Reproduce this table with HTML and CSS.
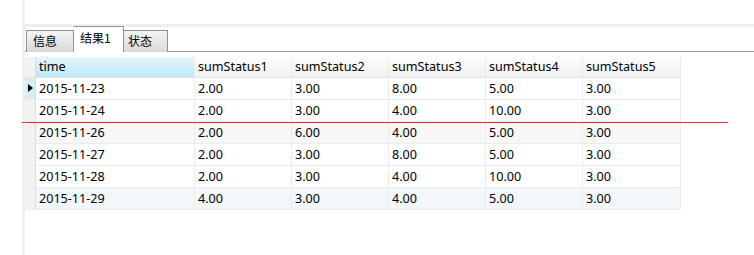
FILE: index.html
```html
<html>
  <head>
    <title>结果1</title>
    <meta charset="utf-8">
    <link rel="stylesheet" href="styles.css">
  </head>
  <body>
    <div class="window">
      <div class="gutter"></div>
      <div class="main">
        <div class="topbar"></div>
        <div class="tabs">
          <div class="tab">信息</div>
          <div class="tab tab--active">结果1</div>
          <div class="tab">状态</div>
        </div>

        <div class="grid">
          <div class="cell ind head"></div>
          <div class="cell head head--sel">time</div>
          <div class="cell head">sumStatus1</div>
          <div class="cell head">sumStatus2</div>
          <div class="cell head">sumStatus3</div>
          <div class="cell head">sumStatus4</div>
          <div class="cell head">sumStatus5</div>

          <div class="cell ind ind--cur"><span class="arrow"></span></div>
          <div class="cell">2015-11-23</div>
          <div class="cell">2.00</div>
          <div class="cell">3.00</div>
          <div class="cell">8.00</div>
          <div class="cell">5.00</div>
          <div class="cell">3.00</div>

          <div class="cell ind"></div>
          <div class="cell">2015-11-24</div>
          <div class="cell">2.00</div>
          <div class="cell">3.00</div>
          <div class="cell">4.00</div>
          <div class="cell">10.00</div>
          <div class="cell">3.00</div>

          <div class="cell ind"></div>
          <div class="cell alt">2015-11-26</div>
          <div class="cell alt">2.00</div>
          <div class="cell alt">6.00</div>
          <div class="cell alt">4.00</div>
          <div class="cell alt">5.00</div>
          <div class="cell alt">3.00</div>

          <div class="cell ind"></div>
          <div class="cell">2015-11-27</div>
          <div class="cell">2.00</div>
          <div class="cell">3.00</div>
          <div class="cell">8.00</div>
          <div class="cell">5.00</div>
          <div class="cell">3.00</div>

          <div class="cell ind"></div>
          <div class="cell">2015-11-28</div>
          <div class="cell">2.00</div>
          <div class="cell">3.00</div>
          <div class="cell">4.00</div>
          <div class="cell">10.00</div>
          <div class="cell">3.00</div>

          <div class="cell ind"></div>
          <div class="cell hover">2015-11-29</div>
          <div class="cell hover">4.00</div>
          <div class="cell hover">3.00</div>
          <div class="cell hover">4.00</div>
          <div class="cell hover">5.00</div>
          <div class="cell hover">3.00</div>
        </div>
      </div>
      <div class="redline"></div>
    </div>
  </body>
</html>
```

FILE: styles.css
```css
body {
  margin: 0;
  background: #ffffff;
  font-family: "Noto Sans", "Noto Sans CJK SC", sans-serif;
  font-size: 12.6px;
  color: #000000;
}

.window {
  position: relative;
  display: flex;
  height: 255px;
  overflow: hidden;
}

.gutter {
  width: 22px;
  border-right: 3px solid #f0f0f0;
}

.main {
  flex: 1;
}

.topbar {
  height: 24px;
  border-bottom: 3px solid #efefef;
}

.tabs {
  display: flex;
  align-items: flex-end;
  height: 24px;
  padding-left: 1px;
  border-bottom: 1px solid #9a9ca3;
}

.tab {
  box-sizing: border-box;
  height: 22px;
  line-height: 20px;
  padding-left: 6px;
  margin-bottom: -1px;
  border: 1px solid #8f9199;
  border-bottom: none;
  background: linear-gradient(#f4f4f4, #d9d9d9);
  font-family: "Noto Sans CJK SC", sans-serif;
  font-size: 12px;
}

.tab:first-child {
  width: 48px;
}

.tab + .tab {
  border-left: none;
}

.tab--active {
  width: 50px;
  height: 26px;
  line-height: 22px;
  padding-left: 6px;
  background: #ffffff;
}

.tab--active + .tab {
  width: 44px;
  padding-left: 4px;
}

.grid {
  display: grid;
  grid-template-columns: 11px 159px 97px 97px 97px 97px 98px;
  grid-template-rows: 21px repeat(6, 22px);
  margin-top: 5px;
}

.cell {
  box-sizing: border-box;
  padding-left: 3px;
  line-height: 21px;
  border-right: 1px solid #ececec;
  border-bottom: 1px solid #ececec;
  white-space: nowrap;
}

.head {
  line-height: 20px;
  background: linear-gradient(#fdfdfd, #f1f1f1);
  border-bottom-color: #e4e4e4;
}

.head--sel {
  background: linear-gradient(#e4f6fd, #bce8f9);
}

.ind {
  padding: 0;
  background: #f2f2f2;
  border-right-color: #dcdcdc;
}

.ind--cur {
  background: #d4eef9;
  position: relative;
}

.arrow {
  position: absolute;
  left: 3px;
  top: 6px;
  border-left: 5px solid #000000;
  border-top: 4px solid transparent;
  border-bottom: 4px solid transparent;
}

.alt {
  background: #f7f7f7;
}

.hover {
  background: #f2f7fc;
}

.redline {
  position: absolute;
  left: 22px;
  top: 122px;
  width: 706px;
  height: 1px;
  background: #ff2a2a;
}
```
